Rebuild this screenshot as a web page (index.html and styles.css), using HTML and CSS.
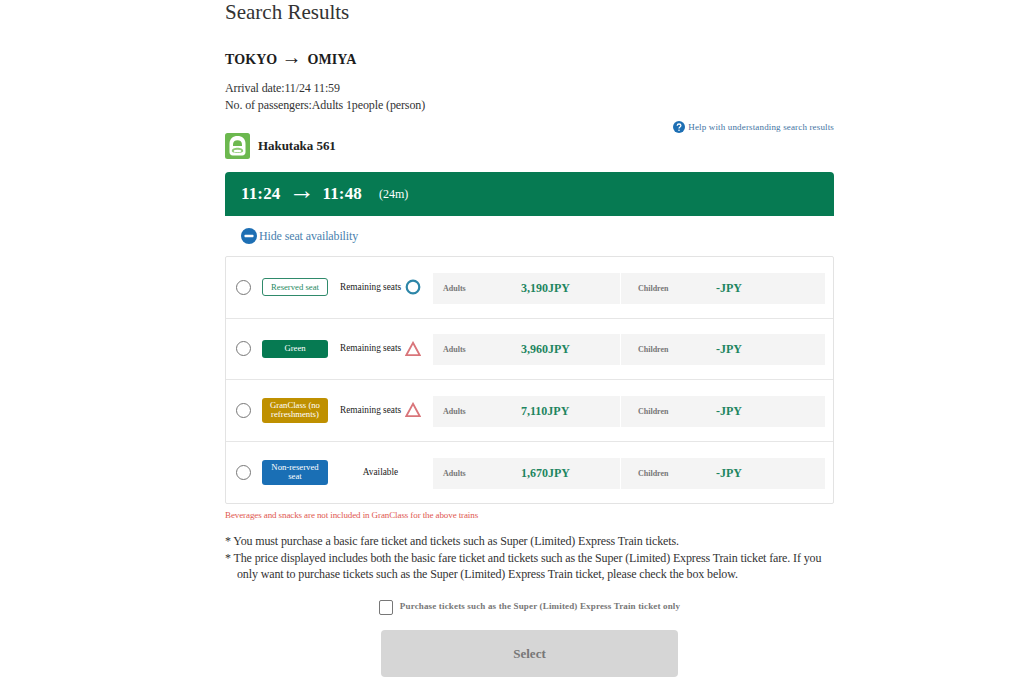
FILE: index.html
```html
<!DOCTYPE html>
<html lang="en">
<head>
<meta charset="utf-8">
<title>Search Results</title>
<link rel="stylesheet" href="styles.css">
</head>
<body>
<main class="page">
  <h1 class="title">Search Results</h1>
  <h2 class="route"><span>TOKYO</span><span class="arrow">→</span><span>OMIYA</span></h2>
  <p class="info">Arrival date:11/24 11:59<br>No. of passengers:Adults 1people (person)</p>
  <div class="help-row">
    <a class="help"><svg class="help-icon" viewBox="0 0 12 12"><circle cx="6" cy="6" r="6" fill="#1d6fb4"/><path d="M4.200 4.700C4.300 3.600 5 3 6 3s1.900.6 1.900 1.600c0 1.400-1.900 1.400-1.900 2.800" fill="none" stroke="#fff" stroke-width="1.300"/><circle cx="6" cy="9.200" r=".8" fill="#fff"/></svg>Help with understanding search results</a>
  </div>
  <div class="train">
    <svg class="train-icon" viewBox="0 0 25 26"><rect width="25" height="26" rx="2.500" fill="#6cb84f"/><path d="M4.500 11C4.500 5.500 8 3 12.500 3s8 2.500 8 8v8c0 2-1.200 3.500-3.300 3.500H7.800c-2.100 0-3.300-1.500-3.300-3.500z" fill="#fff"/><path d="M8 11.500c0-2.800 1.800-4.300 4.500-4.300s4.500 1.500 4.500 4.300v1.500H8z" fill="#6cb84f"/><path d="M6.800 18c0-2.200 2.700-3.200 5.700-3.200s5.700 1 5.700 3.200c0 1.200-2.700 2-5.700 2s-5.700-.8-5.700-2z" fill="#8fcb76"/><ellipse cx="12.500" cy="18" rx="3.800" ry="1.200" fill="#fff"/></svg>
    <span class="train-name">Hakutaka 561</span>
  </div>
  <div class="time-bar">
    <span>11:24</span><span class="time-arrow">→</span><span>11:48</span><span class="duration">(24m)</span>
  </div>
  <a class="toggle"><svg class="toggle-icon" viewBox="0 0 16 16"><circle cx="8" cy="8" r="8" fill="#1d6fb4"/><rect x="3.500" y="6.800" width="9" height="2.400" rx=".6" fill="#fff"/></svg>Hide seat availability</a>
  <section class="seats">
    <div class="seat">
      <span class="radio"></span>
      <span class="badge badge-reserved">Reserved seat</span>
      <div class="status"><span class="status-text">Remaining seats</span><svg class="mark" viewBox="0 0 16 16"><circle cx="8" cy="8" r="6.300" fill="none" stroke="#2d86a8" stroke-width="2.200"/></svg></div>
      <div class="fares">
        <div class="fare fare-adult"><span class="fare-label">Adults</span><span class="fare-price">3,190JPY</span></div>
        <div class="fare fare-child"><span class="fare-label">Children</span><span class="fare-price">-JPY</span></div>
      </div>
    </div>
    <div class="seat">
      <span class="radio"></span>
      <span class="badge badge-green">Green</span>
      <div class="status"><span class="status-text">Remaining seats</span><svg class="mark" viewBox="0 0 16 16"><path d="M8 1.800 14.800 14.200H1.200z" fill="none" stroke="#d9757a" stroke-width="1.800"/></svg></div>
      <div class="fares">
        <div class="fare fare-adult"><span class="fare-label">Adults</span><span class="fare-price">3,960JPY</span></div>
        <div class="fare fare-child"><span class="fare-label">Children</span><span class="fare-price">-JPY</span></div>
      </div>
    </div>
    <div class="seat">
      <span class="radio"></span>
      <span class="badge badge-gran">GranClass (no refreshments)</span>
      <div class="status"><span class="status-text">Remaining seats</span><svg class="mark" viewBox="0 0 16 16"><path d="M8 1.800 14.800 14.200H1.200z" fill="none" stroke="#d9757a" stroke-width="1.800"/></svg></div>
      <div class="fares">
        <div class="fare fare-adult"><span class="fare-label">Adults</span><span class="fare-price">7,110JPY</span></div>
        <div class="fare fare-child"><span class="fare-label">Children</span><span class="fare-price">-JPY</span></div>
      </div>
    </div>
    <div class="seat">
      <span class="radio"></span>
      <span class="badge badge-free">Non-reserved seat</span>
      <div class="status status-center"><span class="status-text">Available</span></div>
      <div class="fares">
        <div class="fare fare-adult"><span class="fare-label">Adults</span><span class="fare-price">1,670JPY</span></div>
        <div class="fare fare-child"><span class="fare-label">Children</span><span class="fare-price">-JPY</span></div>
      </div>
    </div>
  </section>
  <p class="warning">Beverages and snacks are not included in GranClass for the above trains</p>
  <ul class="notes">
    <li>You must purchase a basic fare ticket and tickets such as Super (Limited) Express Train tickets.</li>
    <li>The price displayed includes both the basic fare ticket and tickets such as the Super (Limited) Express Train ticket fare. If you only want to purchase tickets such as the Super (Limited) Express Train ticket, please check the box below.</li>
  </ul>
  <label class="check"><span class="checkbox"></span><span class="check-text">Purchase tickets such as the Super (Limited) Express Train ticket only</span></label>
  <div class="actions"><button class="select" type="button">Select</button></div>
</main>
</body>
</html>
```
FILE: styles.css
```css
* { box-sizing: border-box; }
html, body { margin: 0; padding: 0; background: #fff; }
body {
  font-family: "Liberation Serif", "Times New Roman", serif;
  color: #222;
  height: 683px;
  overflow: hidden;
}
.page { width: 609px; margin-left: 225px; }
.title { margin: 0; font-size: 21px; font-weight: 400; line-height: 25px; color: #333; }
.route {
  margin: 23px 0 0;
  display: flex;
  align-items: center;
  gap: 7px;
  height: 24px;
  font-size: 14px;
  line-height: 24px;
  font-weight: 700;
  color: #1c1c1c;
  letter-spacing: .1px;
}
.route .arrow { margin: 0 -1px 6px -3px; font-size: 20px; font-weight: 400; line-height: 20px; }
.info { margin: 8px 0 0; font-size: 12px; line-height: 17px; color: #333; letter-spacing: -.12px; }
.help-row { display: flex; justify-content: flex-end; margin-top: 5px; height: 16px; }
.help { display: flex; align-items: center; gap: 3px; font-size: 9px; line-height: 16px; color: #3f74a3; letter-spacing: .15px; }
.help-icon { width: 12px; height: 12px; }
.train { display: flex; align-items: center; gap: 8px; margin-top: -2px; height: 26px; }
.train-icon { width: 25px; height: 26px; }
.train-name { font-size: 13px; font-weight: 700; color: #222; letter-spacing: -.05px; }
.time-bar {
  display: flex;
  align-items: center;
  margin-top: 13px;
  height: 44px;
  padding-left: 16px;
  background: #067a52;
  border-radius: 4px 4px 0 0;
  color: #fff;
  font-size: 17px;
  font-weight: 700;
  letter-spacing: .15px;
}
.time-arrow { margin: 0 7.500px 6px 8.500px; font-size: 26px; line-height: 26px; font-weight: 400; letter-spacing: 0; }
.duration { margin-left: 17px; font-size: 12px; font-weight: 400; letter-spacing: 0; }
.toggle {
  display: flex;
  align-items: center;
  margin-top: 11px;
  height: 18px;
  padding-left: 16px;
  font-size: 12px;
  color: #4a7fae;
  letter-spacing: -.13px;
}
.toggle-icon { width: 16px; height: 16px; margin-right: 2px; }
.seats { margin-top: 11px; border: 1px solid #e3e3e3; border-radius: 2px; }
.seat {
  display: flex;
  align-items: center;
  height: 61.500px;
  padding: 0 8px 0 10px;
  border-bottom: 1px solid #e6e6e6;
}
.seat:last-child { border-bottom: 0; }
.radio {
  flex: none;
  width: 15px;
  height: 15px;
  margin-right: 11px;
  border: 1px solid #777;
  border-radius: 50%;
}
.badge {
  flex: none;
  display: flex;
  align-items: center;
  justify-content: center;
  width: 66px;
  padding: 0 6px;
  border-radius: 3px;
  font-size: 8.700px;
  line-height: 9.500px;
  text-align: center;
  color: #fff;
}
.badge-reserved { height: 18px; border: 1px solid #2f8a6b; color: #1f8a62; background: #fff; }
.badge-green { height: 18px; background: #067a52; }
.badge-gran { height: 25px; background: #bf9000; }
.badge-free { height: 25px; background: #1a6fb5; }
.status {
  flex: none;
  display: flex;
  align-items: center;
  gap: 4px;
  width: 105px;
  padding-left: 12px;
  font-size: 9.300px;
  color: #222;
}
.status-text { margin-top: -1px; }
.status-center { justify-content: center; padding-left: 0; }
.mark { width: 16px; height: 16px; }
.fares { flex: 1; display: flex; gap: 1px; height: 31px; margin-top: 2px; }
.fare { display: flex; align-items: center; background: #f4f4f4; padding-left: 10px; }
.fare-adult { width: 187px; }
.fare-child { flex: 1; padding-left: 17px; }
.fare-label { width: 78px; font-size: 8px; font-weight: 700; color: #777; }
.fare-price { font-size: 12px; font-weight: 700; color: #1e8560; }
.warning { margin: 5px 0 0; font-size: 9px; line-height: 12px; color: #e0574f; letter-spacing: -.1px; }
.notes { margin: 12px 0 0; padding: 0; list-style: none; font-size: 12px; line-height: 16.500px; color: #333; letter-spacing: -.13px; }
.notes li { padding-left: 12px; text-indent: -12px; }
.notes li::before { content: "* "; }
.check {
  display: flex;
  align-items: flex-start;
  justify-content: center;
  gap: 7px;
  margin-top: 17px;
  height: 16px;
  font-size: 9px;
  font-weight: 700;
  color: #777;
  letter-spacing: .16px;
}
.check-text { line-height: 12px; }
.checkbox { width: 14px; height: 15px; border: 1px solid #777; border-radius: 2px; }
.actions { display: flex; justify-content: center; margin-top: 14px; }
.select {
  width: 297px;
  height: 47px;
  padding-top: 2px;
  border: 0;
  border-radius: 4px;
  background: #d6d6d6;
  color: #777;
  font-family: inherit;
  font-size: 13px;
  font-weight: 700;
}
```
